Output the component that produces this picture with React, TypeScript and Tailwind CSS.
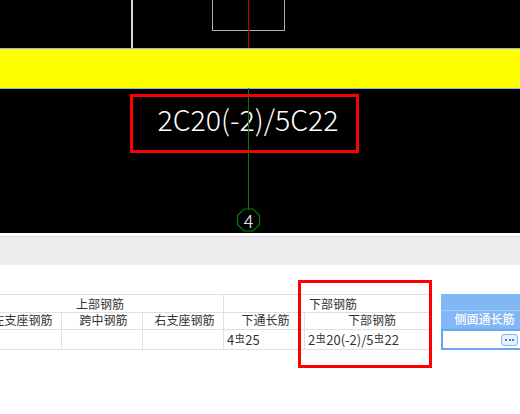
import React from 'react';

const cjk = { fontFamily: '"Noto Sans CJK SC", "Noto Sans", sans-serif' };

function Rebar() {
  return <span className="relative top-[-2px] mx-[0.500px] text-[10px]">虫</span>;
}

export default function App() {
  return (
    <div className="relative h-[414px] w-[520px] overflow-hidden bg-white text-[#333]" style={cjk}>
      {/* CAD canvas */}
      <div className="relative h-[233px] bg-black">
        <div className="absolute left-[131px] top-0 h-[48px] w-[2px] bg-[#d8d8d8]" />
        <div className="absolute left-[212px] top-[-2px] h-[33px] w-[73px] border border-[#b0b0b0]" />
        <div className="absolute left-[248px] top-0 h-[48px] w-[1px] bg-[#c00000]" />
        <div className="absolute left-0 top-[48px] h-[41px] w-full border-y border-[#8fb8e8] bg-[#ffff00]" />
        <div className="absolute left-[130px] top-[94px] flex h-[59px] w-[229px] items-center justify-center border-[3px] border-[#ff0000] pb-[9px] pl-[7px] text-[28.500px] font-light leading-none text-white">
          2C20(-2)/5C22
        </div>
        <div className="absolute left-[248px] top-[88px] h-[122px] w-[1px] bg-[#008000]" />
        <svg className="absolute left-[236px] top-[208px]" width="25" height="25" viewBox="0 0 25 25" fill="none" stroke="#008000" strokeWidth="1.2">
          <path d="M8 1h9l6.500 6.500v9l-6.500 6.500h-9l-6.500-6.500v-9z" />
        </svg>
        <div className="absolute left-[236px] top-[207px] flex h-[25px] w-[25px] items-center justify-center text-[18px] font-light leading-none text-white">4</div>
      </div>

      <div className="h-[3px] bg-white" />
      <div className="h-[1px] bg-[#d4d4d4]" />
      <div className="h-[28px] bg-[#eeeeef]" />

      {/* Table */}
      <div className="mt-[29px] flex text-[12px] leading-none">
        <div className="-ml-[19px] grid w-[450px] grid-cols-[81px_81px_81px_81px_126px] grid-rows-[17px_17px_20px] border-y border-[#e0e0e0]">
          <div className="col-span-3 flex items-center justify-center border-r border-[#e0e0e0] pr-[4px]">上部钢筋</div>
          <div className="col-span-2 flex items-center pl-[85px]">下部钢筋</div>
          {['左支座钢筋', '跨中钢筋', '右支座钢筋', '下通长筋'].map((t) => (
            <div key={t} className="flex items-center justify-center border-t border-r border-[#e0e0e0] pb-[2px] pl-[3px]">{t}</div>
          ))}
          <div className="flex items-center justify-center border-t border-[#e0e0e0] pb-[2px] pl-[8px]">下部钢筋</div>
          <div className="border-t border-r border-[#e0e0e0]" />
          <div className="border-t border-r border-[#e0e0e0]" />
          <div className="border-t border-r border-[#e0e0e0]" />
          <div className="flex items-center border-t border-r border-[#e0e0e0] pl-[3px] text-[13px]">4<Rebar />25</div>
          <div className="flex items-center border-t border-[#e0e0e0] pl-[3px] text-[13px]">2<Rebar />20(-2)/5<Rebar />22</div>
        </div>

        <div className="ml-[10px] flex w-[79px] flex-col">
          <div className="h-[35px] bg-[#7fb8f5]">
            <div className="h-[17px] border-b border-[#a0ccf8]" />
            <div className="flex h-[18px] items-center justify-center pb-[2px] pl-[8px] font-medium text-white">侧面通长筋</div>
          </div>
          <div className="flex h-[21px] items-center justify-end border-2 border-r-0 border-[#6aa8ee] pr-[2px]">
            <div className="flex h-[12px] w-[17px] items-center justify-center gap-[1.500px] rounded-[3px] border border-[#7fb8f5] bg-[#e8f2fd]">
              <span className="h-[2px] w-[2px] bg-[#2f7fe0]" />
              <span className="h-[2px] w-[2px] bg-[#2f7fe0]" />
              <span className="h-[2px] w-[2px] bg-[#2f7fe0]" />
            </div>
          </div>
        </div>
      </div>

      {/* Red annotation */}
      <div className="absolute left-[298px] top-[280px] h-[88px] w-[134px] border-[3px] border-[#ff0000]" />
    </div>
  );
}
